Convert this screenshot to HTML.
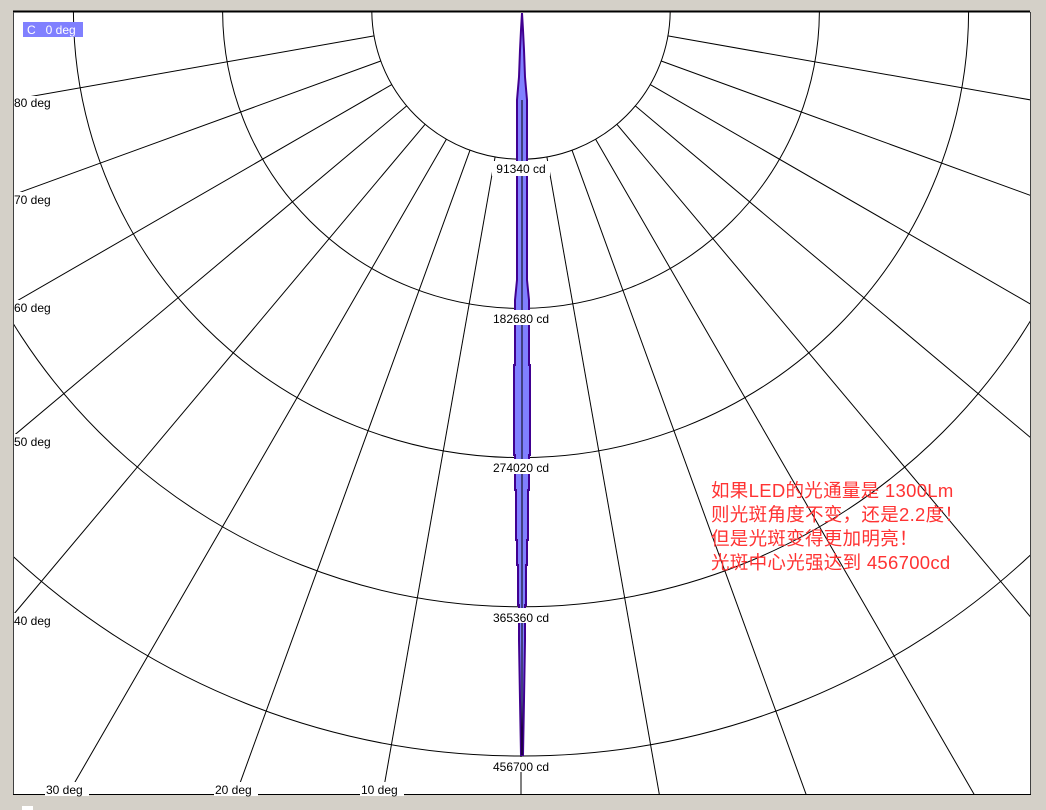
<!DOCTYPE html>
<html><head><meta charset="utf-8"><style>
html,body{margin:0;padding:0;background:#d4d0c8;width:1046px;height:810px;overflow:hidden}
svg{display:block}
</style></head><body>
<svg width="1046" height="810" viewBox="0 0 1046 810" xmlns="http://www.w3.org/2000/svg" font-family="Liberation Sans, sans-serif">
<defs><clipPath id="c"><rect x="13" y="12" width="1017" height="783"/></clipPath></defs>
<rect x="0" y="0" width="1046" height="810" fill="#d4d0c8"/>
<rect x="13" y="12" width="1017" height="783" fill="#fff"/>
<g clip-path="url(#c)" fill="none" stroke="#000" stroke-width="1">
<circle cx="521" cy="10" r="149.2"/>
<circle cx="521" cy="10" r="298.4"/>
<circle cx="521" cy="10" r="447.6"/>
<circle cx="521" cy="10" r="596.8"/>
<circle cx="521" cy="10" r="746"/>
<line x1="521" y1="159" x2="521" y2="1200"/>
</g>
<g clip-path="url(#c)" stroke="#000" stroke-width="1">
<line x1="495.1" y1="156.9" x2="339" y2="1042"/>
<line x1="546.9" y1="156.9" x2="703" y2="1042"/>
<line x1="470" y1="150.2" x2="163" y2="995"/>
<line x1="572" y1="150.2" x2="879" y2="995"/>
<line x1="446.4" y1="139.2" x2="-29" y2="962"/>
<line x1="595.6" y1="139.2" x2="1071" y2="962"/>
<line x1="425.1" y1="124.3" x2="-122" y2="776"/>
<line x1="616.9" y1="124.3" x2="1164" y2="776"/>
<line x1="406.7" y1="105.9" x2="-250" y2="657"/>
<line x1="635.3" y1="105.9" x2="1292" y2="657"/>
<line x1="391.8" y1="84.6" x2="-302" y2="485"/>
<line x1="650.2" y1="84.6" x2="1344" y2="485"/>
<line x1="380.8" y1="61" x2="-372" y2="335"/>
<line x1="661.2" y1="61" x2="1414" y2="335"/>
<line x1="374.1" y1="35.9" x2="-414" y2="175"/>
<line x1="667.9" y1="35.9" x2="1456" y2="175"/>
</g>
<polygon clip-path="url(#c)" fill="#8080ff" stroke="#400090" stroke-width="2" stroke-linejoin="miter"
points="522,13 523,30 524,50 525,77 527,100 527,280 529,300 529,365 530,365 530,455 529,455 529,490 528,490 528,540 527,540 527,565 526,565 526,605 525,605 525,640 524,700 523,755 521,755 520,700 519,640 519,605 518,605 518,565 517,565 517,540 516,540 516,490 515,490 515,455 514,455 514,365 515,365 515,300 517,280 517,100 519,77 520,50 521,30"/>
<line x1="522" y1="100" x2="522" y2="755" stroke="#000" stroke-width="1"/>
<line x1="13" y1="11.5" x2="1030" y2="11.5" stroke="#000" stroke-width="2"/>
<line x1="13.5" y1="12" x2="13.5" y2="795" stroke="#404040"/>
<line x1="1030.5" y1="12" x2="1030.5" y2="795" stroke="#404040"/>
<line x1="13" y1="794.5" x2="1031" y2="794.5" stroke="#000"/>
<g font-size="12" fill="#000">
<rect x="492" y="161" width="58" height="15" fill="#fff"/><text x="521" y="173" text-anchor="middle">91340 cd</text>
<rect x="489" y="310" width="64" height="15" fill="#fff"/><text x="521" y="323" text-anchor="middle">182680 cd</text>
<rect x="489" y="459" width="64" height="15" fill="#fff"/><text x="521" y="472" text-anchor="middle">274020 cd</text>
<rect x="489" y="608" width="64" height="15" fill="#fff"/><text x="521" y="622" text-anchor="middle">365360 cd</text>
<rect x="489" y="757" width="64" height="15" fill="#fff"/><text x="521" y="771" text-anchor="middle">456700 cd</text>
<rect x="14" y="96" width="40" height="14" fill="#fff"/><text x="14" y="107">80 deg</text>
<rect x="14" y="192" width="40" height="14" fill="#fff"/><text x="14" y="204">70 deg</text>
<rect x="14" y="300" width="40" height="14" fill="#fff"/><text x="14" y="312">60 deg</text>
<rect x="14" y="434" width="40" height="14" fill="#fff"/><text x="14" y="446">50 deg</text>
<rect x="14" y="613" width="40" height="14" fill="#fff"/><text x="14" y="625">40 deg</text>
<rect x="45" y="782" width="44" height="14" fill="#fff"/><text x="46" y="794">30 deg</text>
<rect x="214" y="782" width="44" height="14" fill="#fff"/><text x="215" y="794">20 deg</text>
<rect x="360" y="782" width="44" height="14" fill="#fff"/><text x="361" y="794">10 deg</text>
<rect x="23" y="22" width="60" height="15" fill="#8080ff"/><text x="27" y="34" fill="#fff">C&#160;&#160;&#160;0 deg</text>
</g>
<rect x="22" y="806" width="11" height="4" fill="#fff"/>
<g font-family="Liberation Sans, 'Noto Sans CJK SC', sans-serif" font-size="18.5" fill="#ff3333" letter-spacing="0.3">
<text x="711" y="497">如果LED的光通量是 1300Lm</text>
<text x="711" y="521">则光斑角度不变，还是2.2度！</text>
<text x="711" y="545">但是光斑变得更加明亮！</text>
<text x="711" y="569">光斑中心光强达到 456700cd</text>
</g>
</svg>
</body></html>
